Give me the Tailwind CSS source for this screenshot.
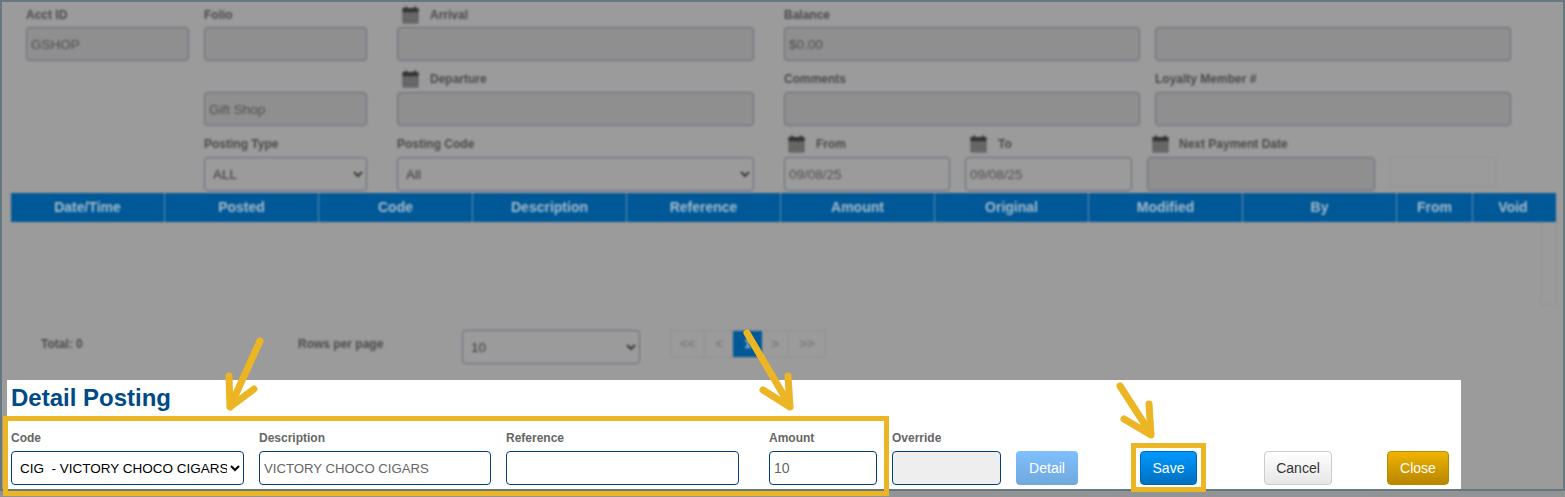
<!DOCTYPE html>
<html lang="en">

<head>
  <meta charset="UTF-8">
  <meta name="viewport" content="width=device-width, initial-scale=1.0">
  <title>Detail Posting</title>
  <script src="https://cdn.jsdelivr.net/npm/@tailwindcss/browser@4"></script>
</head>

<body class="bg-[#929394] font-['Liberation_Sans',Arial,sans-serif] overflow-hidden h-[497px]">
  <div class="relative w-[1565px] h-[491px] bg-[#9b9b9b] border-2 border-[#65777f]">

    <!-- Dimmed form behind the dialog -->
    <div class="blur-[1px]">
      <div class="flex pl-[24px] gap-[15px]">
        <div class="w-[163px]">
          <div class="h-[25px] flex items-center text-[12px] font-bold text-[#4a4a4a]">Acct ID</div>
          <input disabled value="GSHOP" class="w-full h-[34px] px-[4px] text-[13.5px] text-[#505050] bg-[#8f8f8f] border border-[#666c7b] rounded-[4px]">
        </div>
        <div class="w-[163px]">
          <div class="h-[25px] flex items-center text-[12px] font-bold text-[#4a4a4a]">Folio</div>
          <input disabled class="w-full h-[34px] px-[4px] text-[13.5px] bg-[#8f8f8f] border border-[#666c7b] rounded-[4px]">
        </div>
        <div class="w-[357px] ml-[15px]">
          <div class="h-[25px] flex items-center gap-[11px] text-[12px] font-bold text-[#4a4a4a]">
            <svg class="ml-[5px]" width="17" height="18" viewBox="0 0 17 18"><rect x="0.5" y="2" width="16" height="15.500" rx="1" fill="#5a5a5a"/><rect x="0.5" y="2" width="16" height="4" fill="#333"/><rect x="3" y="0.5" width="2" height="3" fill="#333"/><rect x="12" y="0.5" width="2" height="3" fill="#333"/><path d="M1 9h15M1 12h15M1 15h15M4.500 6v11M8.500 6v11M12.500 6v11" stroke="#7c7c7c" stroke-width="0.7"/></svg>
            Arrival
          </div>
          <input disabled class="w-full h-[34px] px-[4px] text-[13.5px] bg-[#8f8f8f] border border-[#666c7b] rounded-[4px]">
        </div>
        <div class="w-[356px] ml-[15px]">
          <div class="h-[25px] flex items-center text-[12px] font-bold text-[#4a4a4a]">Balance</div>
          <input disabled value="$0.00" class="w-full h-[34px] px-[4px] text-[13.5px] text-[#505050] bg-[#8f8f8f] border border-[#666c7b] rounded-[4px]">
        </div>
        <div class="w-[356px] pt-[25px]">
          <input disabled class="w-full h-[34px] px-[4px] text-[13.5px] bg-[#8f8f8f] border border-[#666c7b] rounded-[4px]">
        </div>
      </div>

      <div class="flex pl-[202px] gap-[30px] mt-[6px]">
        <div class="w-[163px] pt-[25px]">
          <input disabled value="Gift Shop" class="w-full h-[34px] px-[4px] text-[13.5px] text-[#505050] bg-[#8f8f8f] border border-[#666c7b] rounded-[4px]">
        </div>
        <div class="w-[357px]">
          <div class="h-[25px] pb-[2px] flex items-center gap-[11px] text-[12px] font-bold text-[#4a4a4a]">
            <svg class="ml-[5px]" width="17" height="18" viewBox="0 0 17 18"><rect x="0.5" y="2" width="16" height="15.500" rx="1" fill="#5a5a5a"/><rect x="0.5" y="2" width="16" height="4" fill="#333"/><rect x="3" y="0.5" width="2" height="3" fill="#333"/><rect x="12" y="0.5" width="2" height="3" fill="#333"/><path d="M1 9h15M1 12h15M1 15h15M4.500 6v11M8.500 6v11M12.500 6v11" stroke="#7c7c7c" stroke-width="0.7"/></svg>
            Departure
          </div>
          <input disabled class="w-full h-[34px] px-[4px] text-[13.5px] bg-[#8f8f8f] border border-[#666c7b] rounded-[4px]">
        </div>
        <div class="w-[356px]">
          <div class="h-[25px] pb-[2px] flex items-center text-[12px] font-bold text-[#4a4a4a]">Comments</div>
          <input disabled class="w-full h-[34px] px-[4px] text-[13.5px] bg-[#8f8f8f] border border-[#666c7b] rounded-[4px]">
        </div>
        <div class="w-[356px] -ml-[15px]">
          <div class="h-[25px] pb-[2px] flex items-center text-[12px] font-bold text-[#4a4a4a]">Loyalty Member #</div>
          <input disabled class="w-full h-[34px] px-[4px] text-[13.5px] bg-[#8f8f8f] border border-[#666c7b] rounded-[4px]">
        </div>
      </div>

      <div class="flex pl-[202px] mt-[6px]">
        <div class="w-[163px]">
          <div class="h-[25px] pb-[2px] flex items-center text-[12px] font-bold text-[#4a4a4a]">Posting Type</div>
          <select class="w-full h-[34px] pl-[4px] text-[13.5px] text-[#3a3a3a] bg-[#9b9b9b] border border-[#666c7b] rounded-[4px]"><option>ALL</option></select>
        </div>
        <div class="w-[357px] ml-[30px]">
          <div class="h-[25px] pb-[2px] flex items-center text-[12px] font-bold text-[#4a4a4a]">Posting Code</div>
          <select class="w-full h-[34px] pl-[4px] text-[13.5px] text-[#3a3a3a] bg-[#9b9b9b] border border-[#666c7b] rounded-[4px]"><option>All</option></select>
        </div>
        <div class="w-[166px] ml-[30px]">
          <div class="h-[25px] pb-[2px] flex items-center gap-[11px] text-[12px] font-bold text-[#4a4a4a]">
            <svg class="ml-[4px]" width="17" height="18" viewBox="0 0 17 18"><rect x="0.5" y="2" width="16" height="15.500" rx="1" fill="#5a5a5a"/><rect x="0.5" y="2" width="16" height="4" fill="#333"/><rect x="3" y="0.5" width="2" height="3" fill="#333"/><rect x="12" y="0.5" width="2" height="3" fill="#333"/><path d="M1 9h15M1 12h15M1 15h15M4.500 6v11M8.500 6v11M12.500 6v11" stroke="#7c7c7c" stroke-width="0.7"/></svg>
            From
          </div>
          <input disabled value="09/08/25" class="w-full h-[34px] px-[4px] text-[13.5px] text-[#505050] bg-[#9b9b9b] border border-[#666c7b] rounded-[4px]">
        </div>
        <div class="w-[167px] ml-[15px]">
          <div class="h-[25px] pb-[2px] flex items-center gap-[11px] text-[12px] font-bold text-[#4a4a4a]">
            <svg class="ml-[5px]" width="17" height="18" viewBox="0 0 17 18"><rect x="0.5" y="2" width="16" height="15.500" rx="1" fill="#5a5a5a"/><rect x="0.5" y="2" width="16" height="4" fill="#333"/><rect x="3" y="0.5" width="2" height="3" fill="#333"/><rect x="12" y="0.5" width="2" height="3" fill="#333"/><path d="M1 9h15M1 12h15M1 15h15M4.500 6v11M8.500 6v11M12.500 6v11" stroke="#7c7c7c" stroke-width="0.7"/></svg>
            To
          </div>
          <input disabled value="09/08/25" class="w-full h-[34px] px-[4px] text-[13.5px] text-[#505050] bg-[#9b9b9b] border border-[#666c7b] rounded-[4px]">
        </div>
        <div class="w-[228px] ml-[15px]">
          <div class="h-[25px] pb-[2px] flex items-center gap-[10px] text-[12px] font-bold text-[#4a4a4a]">
            <svg class="ml-[5px]" width="17" height="18" viewBox="0 0 17 18"><rect x="0.5" y="2" width="16" height="15.500" rx="1" fill="#5a5a5a"/><rect x="0.5" y="2" width="16" height="4" fill="#333"/><rect x="3" y="0.5" width="2" height="3" fill="#333"/><rect x="12" y="0.5" width="2" height="3" fill="#333"/><path d="M1 9h15M1 12h15M1 15h15M4.500 6v11M8.500 6v11M12.500 6v11" stroke="#7c7c7c" stroke-width="0.7"/></svg>
            Next Payment Date
          </div>
          <input disabled class="w-full h-[34px] px-[4px] text-[13.5px] bg-[#8f8f8f] border border-[#666c7b] rounded-[4px]">
        </div>
        <div class="w-[106px] ml-[15px] pt-[25px]">
          <input disabled class="w-full h-[30px] bg-[#9b9b9b] border border-[#919191]">
        </div>
      </div>

      <!-- Grid header -->
      <div class="flex ml-[9px] mt-[2px] w-[1545px] h-[29px] bg-[#005897] text-[14px] font-bold text-[#a6bccd] text-center leading-[29px]">
        <div class="w-[154px] border-r border-[#5f8fb5]">Date/Time</div>
        <div class="w-[154px] border-r border-[#5f8fb5]">Posted</div>
        <div class="w-[154px] border-r border-[#5f8fb5]">Code</div>
        <div class="w-[154px] border-r border-[#5f8fb5]">Description</div>
        <div class="w-[154px] border-r border-[#5f8fb5]">Reference</div>
        <div class="w-[154px] border-r border-[#5f8fb5]">Amount</div>
        <div class="w-[154px] border-r border-[#5f8fb5]">Original</div>
        <div class="w-[154px] border-r border-[#5f8fb5]">Modified</div>
        <div class="w-[154px] border-r border-[#5f8fb5]">By</div>
        <div class="w-[76px] border-r border-[#5f8fb5]">From</div>
        <div class="flex-1 pr-[3px]">Void</div>
      </div>
      <div class="h-[83px] ml-[1539px] w-[16px] border-x border-b border-[#939393]"></div>

      <!-- Pager -->
      <div class="flex items-start mt-[25px] h-[50px]">
        <div class="w-[296px] pl-[39px] pt-[5px] text-[12px] font-bold text-[#4a4a4a]">Total: 0</div>
        <div class="w-[164px] pt-[5px] text-[12px] font-bold text-[#4a4a4a]">Rows per page</div>
        <select class="w-[178px] h-[34px] pl-[4px] text-[13.5px] text-[#3a3a3a] bg-[#9b9b9b] border border-[#666c7b] rounded-[4px]"><option>10</option></select>
        <div class="flex ml-[30px] h-[28px] text-[13px] font-bold text-[#7a7a7a] border border-[#919191] rounded-[3px]">
          <div class="w-[34px] flex items-center justify-center border-r border-[#919191]">&lt;&lt;</div>
          <div class="w-[28px] flex items-center justify-center">&lt;</div>
          <div class="w-[29px] flex items-center justify-center bg-[#005897] text-[#a6bccd]">1</div>
          <div class="w-[27px] flex items-center justify-center border-r border-[#919191]">&gt;</div>
          <div class="w-[36px] flex items-center justify-center">&gt;&gt;</div>
        </div>
      </div>
    </div>

    <!-- Detail Posting panel -->
    <div class="absolute left-[5px] top-[378px] w-[1454px] h-[109px] bg-white">
      <h2 class="pl-[4px] pt-[4px] h-[46px] text-[24px] leading-[28px] font-bold text-[#004a87]">Detail Posting</h2>
      <div class="flex items-end pl-[4px]">
        <div class="w-[233px]">
          <div class="h-[25px] pb-[2px] flex items-center text-[12px] font-bold text-[#666]">Code</div>
          <select class="w-full h-[34px] pl-[4px] text-[13.5px] text-black bg-white border border-[#003f7f] rounded-[4px]"><option>CIG&nbsp; - VICTORY CHOCO CIGARS</option></select>
        </div>
        <div class="w-[232px] ml-[15px]">
          <div class="h-[25px] pb-[2px] flex items-center text-[12px] font-bold text-[#666]">Description</div>
          <input value="VICTORY CHOCO CIGARS" class="w-full h-[34px] px-[4px] text-[13.2px] text-[#666] bg-white border border-[#003f7f] rounded-[4px]">
        </div>
        <div class="w-[233px] ml-[15px]">
          <div class="h-[25px] pb-[2px] flex items-center text-[12px] font-bold text-[#666]">Reference</div>
          <input class="w-full h-[34px] px-[4px] text-[13.2px] bg-white border border-[#003f7f] rounded-[4px]">
        </div>
        <div class="w-[108px] ml-[30px]">
          <div class="h-[25px] pb-[2px] flex items-center text-[12px] font-bold text-[#666]">Amount</div>
          <input value="10" class="w-full h-[34px] px-[4px] text-[14px] text-[#666] bg-white border border-[#003f7f] rounded-[4px]">
        </div>
        <div class="w-[109px] ml-[15px]">
          <div class="h-[25px] pb-[2px] flex items-center text-[12px] font-bold text-[#666]">Override</div>
          <input disabled class="w-full h-[34px] px-[4px] text-[13.2px] bg-[#eeeeee] border border-[#003f7f] rounded-[4px]">
        </div>
        <button class="w-[62px] h-[34px] ml-[15px] text-[14px] text-white rounded-[4px] bg-gradient-to-b from-[#80c0ff] to-[#6fa8dc]">Detail</button>
        <button class="w-[57px] h-[34px] ml-[62px] text-[14px] text-white rounded-[4px] border border-[#0066b3] bg-gradient-to-b from-[#0099ff] to-[#0070c0]">Save</button>
        <button class="w-[68px] h-[34px] ml-[67px] text-[14px] text-[#333] rounded-[4px] border border-[#cccccc] bg-gradient-to-b from-white to-[#e6e6e6]">Cancel</button>
        <button class="w-[62px] h-[34px] ml-[55px] text-[14px] text-white rounded-[4px] border border-[#b88a00] bg-gradient-to-b from-[#f0b400] to-[#b88600]">Close</button>
      </div>
    </div>

    <!-- Callouts drawn over the screenshot -->
    <div class="absolute left-[1px] top-[414px] w-[886px] h-[80px] border-[5px] border-[#ebb524]"></div>
    <div class="absolute left-[1129px] top-[441px] w-[75px] h-[49px] border-[5px] border-[#ebb524]"></div>
    <svg class="absolute -left-[2px] -top-[2px]" width="1565" height="497" fill="none" stroke="#ebb524" stroke-width="7" stroke-linecap="round" stroke-linejoin="round">
      <path d="M260 341 L230 407 M229 376 L230 407 L254 389"/>
      <path d="M747 333 L790 406 M788 376 L790 407 L763 390"/>
      <path d="M1120 386 L1151 434 M1149 404 L1151 435 L1124 419"/>
    </svg>
  </div>
</body>

</html>
